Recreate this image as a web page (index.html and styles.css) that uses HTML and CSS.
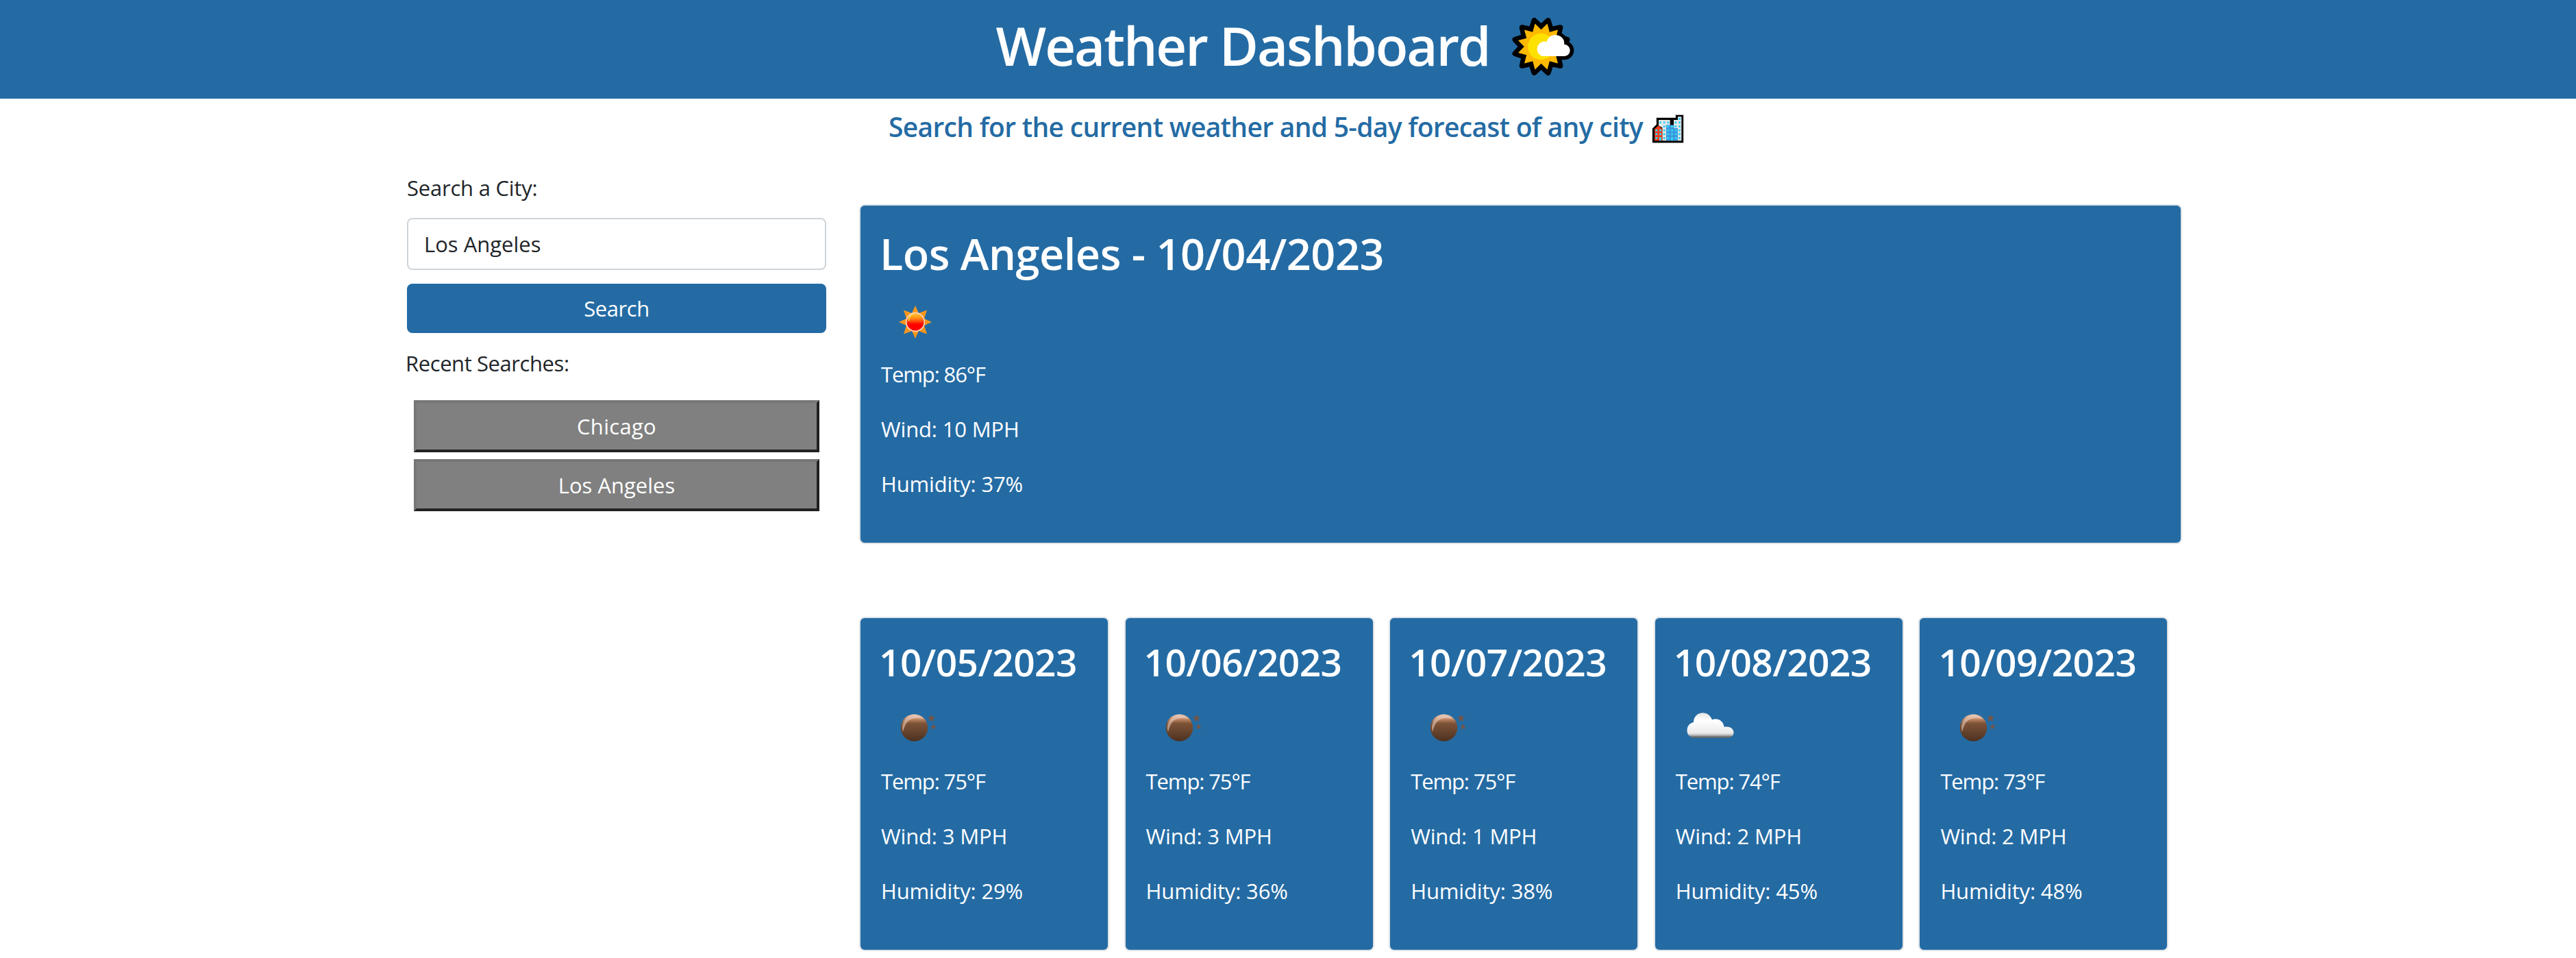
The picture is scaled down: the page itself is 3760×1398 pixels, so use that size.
FILE: index.html
```html
<!DOCTYPE html>
<html lang="en">
<head>
<meta charset="utf-8">
<title>Weather Dashboard</title>
<link rel="stylesheet" href="styles.css">
</head>
<body>
<svg class="defs" aria-hidden="true">
  <defs>
    <linearGradient id="moonBody" x1="0" y1="0" x2="0" y2="1">
      <stop offset="0" stop-color="#e6cbbb"/><stop offset=".16" stop-color="#c98f6b"/><stop offset=".34" stop-color="#7d5336"/><stop offset="1" stop-color="#4c3122"/>
    </linearGradient>
    <linearGradient id="sunBody" x1="0" y1="0" x2="0" y2="1">
      <stop offset="0" stop-color="#ffc233"/><stop offset=".25" stop-color="#ff9a1c"/><stop offset=".5" stop-color="#fe3a06"/><stop offset=".62" stop-color="#ff0000"/><stop offset="1" stop-color="#ff0000"/>
    </linearGradient>
    <linearGradient id="cloudBody" x1="0" y1="0" x2="0" y2="1">
      <stop offset="0" stop-color="#e6e6e6"/><stop offset=".3" stop-color="#ffffff"/><stop offset=".8" stop-color="#ebebeb"/><stop offset=".89" stop-color="#b8b8b8"/><stop offset=".94" stop-color="#777777"/><stop offset="1" stop-color="#606060"/>
    </linearGradient>
    <filter id="soft" x="-10%" y="-10%" width="120%" height="120%"><feGaussianBlur stdDeviation=".5"/></filter>
    <symbol id="moon" viewBox="0 0 100 100">
      <g filter="url(#soft)">
        <circle cx="48.5" cy="50" r="19.8" fill="url(#moonBody)"/>
        <path d="M32 56C28 42 38 32 48 31.5c6 0 11 2 14 6-8-2.500-17-2-22 2.500-5 4.500-6 10-8 16z" fill="#eed3c4" opacity=".55"/>
        <path d="M73.500 30.500l1.500 3.800 4 .2-3 2.600 1 4-3.500-2.200-3.500 2.200 1-4-3-2.600 4-.2z" fill="#745548"/>
        <path d="M76.500 44l1.200 3 3.200.2-2.500 2 .8 3.200-2.700-1.800-2.700 1.800.8-3.200-2.500-2 3.200-.2z" fill="#745548"/>
      </g>
    </symbol>
    <symbol id="sun" viewBox="0 0 100 100">
      <g filter="url(#soft)">
        <path d="M50 26l5 11 12-4.500L63 45l11 5-11 5 4 12.500L55 63l-5 11-5-11-12 4.500L37 55l-11-5 11-5-4-12.500L45 37z" fill="#f9961d"/>
        <circle cx="50" cy="50" r="13.300" fill="url(#sunBody)" stroke="#fbd3bd" stroke-width="1.700"/>
        <path d="M40.500 48c0-6 4-10 8-10" fill="none" stroke="#ffd84a" stroke-width="1.500"/>
      </g>
    </symbol>
    <symbol id="cloud" viewBox="0 0 100 100">
      <path filter="url(#soft)" d="M27 65C20 64 16.500 59.500 16.500 54c0-6.500 4-11 9.500-12C26 33.500 32 28.300 39.500 28.300c6.500 0 11 4 13.500 10 8-3.500 16.500 1.500 17.500 10.500 7.500-1.500 14 2 14 8.200 0 4.500-3 7-7.500 8z" fill="url(#cloudBody)"/>
    </symbol>
  </defs>
</svg>

<header class="header">
  <h1 class="header-title">Weather Dashboard</h1>
  <svg class="header-icon" viewBox="49.5 24 300 288">
    <g transform="translate(180 174)">
      <polygon points="86,0 114,-30.500 74.500,-43 83.400,-83.400 43,-74.500 30.500,-114 0,-86 -30.500,-114 -43,-74.500 -83.400,-83.400 -74.500,-43 -114,-30.500 -86,0 -114,30.500 -74.500,43 -83.400,83.400 -43,74.500 -30.500,114 0,86 30.500,114 43,74.500 83.400,83.400 74.500,43 114,30.500" stroke="#000" stroke-width="24" stroke-linejoin="round"/>
    </g>
    <path d="M184 216a31 31 0 0 1 16-61c6-18 20-32 40-32 24 0 42 18 42 42a25.500 25.500 0 0 1 0 51z" stroke="#000" stroke-width="32"/>
    <polygon transform="translate(180 174)" points="74,0 100.500,-27 64,-37 73.500,-73.500 37,-64 27,-100.500 0,-74 -27,-100.500 -37,-64 -73.500,-73.500 -64,-37 -100.500,-27 -74,0 -100.500,27 -64,37 -73.500,73.500 -37,64 -27,100.500 0,74 27,100.500 37,64 73.500,73.500 64,37 80,40" fill="#ffb900"/>
    <circle cx="180" cy="174" r="58" fill="#fde100"/>
    <path d="M186 216a32 32 0 1 1 18-63c6-18 18-30 38-30 24 0 42 18 39 42a25.500 25.500 0 0 1 0 51z" fill="#fff"/>
  </svg>
</header>

<div class="subtitle">
  <h2 class="subtitle-text">Search for the current weather and 5-day forecast of any city</h2>
  <svg class="subtitle-icon" viewBox="12 0 180 180">
    <path d="M56 50h84V37h35v123H38V97l18-17z" stroke="#d9d9d9" stroke-width="3"/>
    <path d="M57 52h85V39h32v121H40V98l17-17z"/>
    <path d="M66 60h50v91H82V94l-16-9zM132 60h18V46h16v105h-34z" fill="#e6e6e6"/>
    <path d="M48 100l17-15 17 15v51H48z" fill="#f03a17"/>
    <path d="M99 82h34v14h17v55H99z" fill="#3a96dd"/>
    <g fill="#37d2f5">
      <path d="M69 67h9v9h-9zM86 67h9v9h-9zM103 67h9v9h-9zM136 67h9v9h-9zM153 51h9v9h-9zM153 67h9v9h-9zM86 84h9v9h-9zM136 84h9v9h-9zM153 84h9v9h-9z"/>
      <path d="M52 101h9v9h-9zM69 101h9v9h-9zM86 101h9v9h-9zM153 101h9v9h-9zM52 118h9v9h-9zM69 118h9v9h-9zM86 118h9v9h-9zM153 118h9v9h-9zM52 135h9v9h-9zM69 135h9v16h-9zM86 135h9v9h-9zM153 135h9v9h-9z"/>
      <path d="M103 84h9v9h-9zM120 84h9v9h-9zM103 101h9v9h-9zM120 101h9v9h-9zM137 101h9v9h-9zM103 118h9v9h-9zM120 118h9v9h-9zM137 118h9v9h-9zM103 135h9v9h-9zM120 135h9v16h-9zM137 135h9v9h-9z"/>
    </g>
  </svg>
</div>

<main class="layout">
  <aside class="sidebar">
    <label class="label" for="city">Search a City:</label>
    <input class="city-input" id="city" type="text" value="Los Angeles">
    <button class="search-button" type="button">Search</button>
    <p class="label label-recent">Recent Searches:</p>
    <div class="history">
      <button class="history-button history-chicago" type="button">Chicago</button>
      <button class="history-button" type="button">Los Angeles</button>
    </div>
  </aside>

  <div class="results">
    <section class="card current">
      <h2 class="current-title">Los Angeles - 10/04/2023</h2>
      <svg class="weather-icon"><use href="#sun"/></svg>
      <p class="temp">Temp: 86°F</p>
      <p>Wind: 10 MPH</p>
      <p>Humidity: 37%</p>
    </section>
    <section class="forecast">
      <article class="card day">
        <h3 class="day-title">10/05/2023</h3>
        <svg class="weather-icon"><use href="#moon"/></svg>
        <p class="temp">Temp: 75°F</p><p>Wind: 3 MPH</p><p>Humidity: 29%</p>
      </article>
      <article class="card day">
        <h3 class="day-title">10/06/2023</h3>
        <svg class="weather-icon"><use href="#moon"/></svg>
        <p class="temp">Temp: 75°F</p><p>Wind: 3 MPH</p><p>Humidity: 36%</p>
      </article>
      <article class="card day">
        <h3 class="day-title">10/07/2023</h3>
        <svg class="weather-icon"><use href="#moon"/></svg>
        <p class="temp">Temp: 75°F</p><p>Wind: 1 MPH</p><p>Humidity: 38%</p>
      </article>
      <article class="card day">
        <h3 class="day-title">10/08/2023</h3>
        <svg class="weather-icon"><use href="#cloud"/></svg>
        <p class="temp">Temp: 74°F</p><p>Wind: 2 MPH</p><p>Humidity: 45%</p>
      </article>
      <article class="card day">
        <h3 class="day-title">10/09/2023</h3>
        <svg class="weather-icon"><use href="#moon"/></svg>
        <p class="temp">Temp: 73°F</p><p>Wind: 2 MPH</p><p>Humidity: 48%</p>
      </article>
    </section>
  </div>
</main>
</body>
</html>
```
FILE: styles.css
```css
* {
  box-sizing: border-box;
}

body {
  margin: 0;
  height: 1398px;
  overflow: hidden;
  background: #fff;
  color: #212529;
  font: 400 31px/48px "Open Sans", "Noto Sans", sans-serif;
}

h1, h2, h3, p {
  margin: 0;
  font-weight: 400;
}

h1, h2, h3 {
  font-weight: 600;
  white-space: nowrap;
}

svg {
  display: block;
}

.defs {
  position: absolute;
  width: 0;
  height: 0;
}

.header {
  display: flex;
  justify-content: center;
  align-items: center;
  gap: 32px;
  height: 144px;
  padding-bottom: 12px;
  background: #246ba4;
  color: #fff;
}

.header-title {
  font-size: 78px;
  line-height: 96px;
  letter-spacing: -2.11px;
}

.header-icon {
  width: 100px;
  height: 96px;
}

.subtitle {
  display: flex;
  justify-content: center;
  align-items: center;
  gap: 5px;
  height: 48px;
  margin-top: 17px;
  color: #246ba4;
}

.subtitle-text {
  font-size: 39px;
  letter-spacing: -0.7px;
}

.subtitle-icon {
  width: 60px;
  height: 60px;
}

.layout {
  display: grid;
  grid-template-columns: 612px 1931px;
  column-gap: 48px;
  padding-left: 594px;
}

.sidebar {
  display: flex;
  flex-direction: column;
  padding-top: 41px;
}

.label {
  letter-spacing: -0.22px;
}

.label-recent {
  margin: 20px 0 0 -2px;
  letter-spacing: -0.42px;
}

.city-input {
  height: 76px;
  margin-top: 20px;
  padding: 0 23px;
  border: 2px solid #ced4da;
  border-radius: 8px;
  background: #fff;
  color: #212529;
  font: inherit;
}

.search-button {
  height: 72px;
  margin-top: 20px;
  padding: 0;
  border: 0;
  border-radius: 8px;
  background: #246ba4;
  color: #fff;
  font: inherit;
  letter-spacing: -0.45px;
}

.history {
  display: flex;
  flex-direction: column;
  gap: 10px;
  margin: 30px 10px 0;
}

.history-button {
  height: 76px;
  padding: 0;
  border: 4px solid;
  border-color: #767676 #212121 #212121 #767676;
  background: #808080;
  color: #fff;
  font: inherit;
}

.history-chicago {
  letter-spacing: 0.29px;
}

.results {
  padding-top: 89px;
}

.card {
  display: flex;
  flex-direction: column;
  padding: 30px;
  border: 2px solid #dee2e6;
  border-radius: 8px;
  background: #246ba4;
  color: #fff;
  letter-spacing: -0.15px;
}

.current {
  height: 496px;
  padding-top: 32px;
}

.current-title {
  margin-left: -2px;
  font-size: 63px;
  line-height: 76px;
  letter-spacing: -0.48px;
}

.weather-icon {
  flex: none;
  width: 100px;
  height: 100px;
}

.current .weather-icon {
  margin: 12px 0 2px;
}

.card p + p {
  margin-top: 32px;
}

.card .temp {
  letter-spacing: -1.12px;
}

.forecast {
  display: grid;
  grid-template-columns: repeat(5, 365px);
  column-gap: 21.6px;
  margin-top: 106px;
}

.day {
  height: 488px;
}

.day-title {
  margin-left: -3px;
  font-size: 55px;
  line-height: 68px;
  letter-spacing: -0.56px;
}

.day .weather-icon {
  margin: 12px 0 4px;
}
```
